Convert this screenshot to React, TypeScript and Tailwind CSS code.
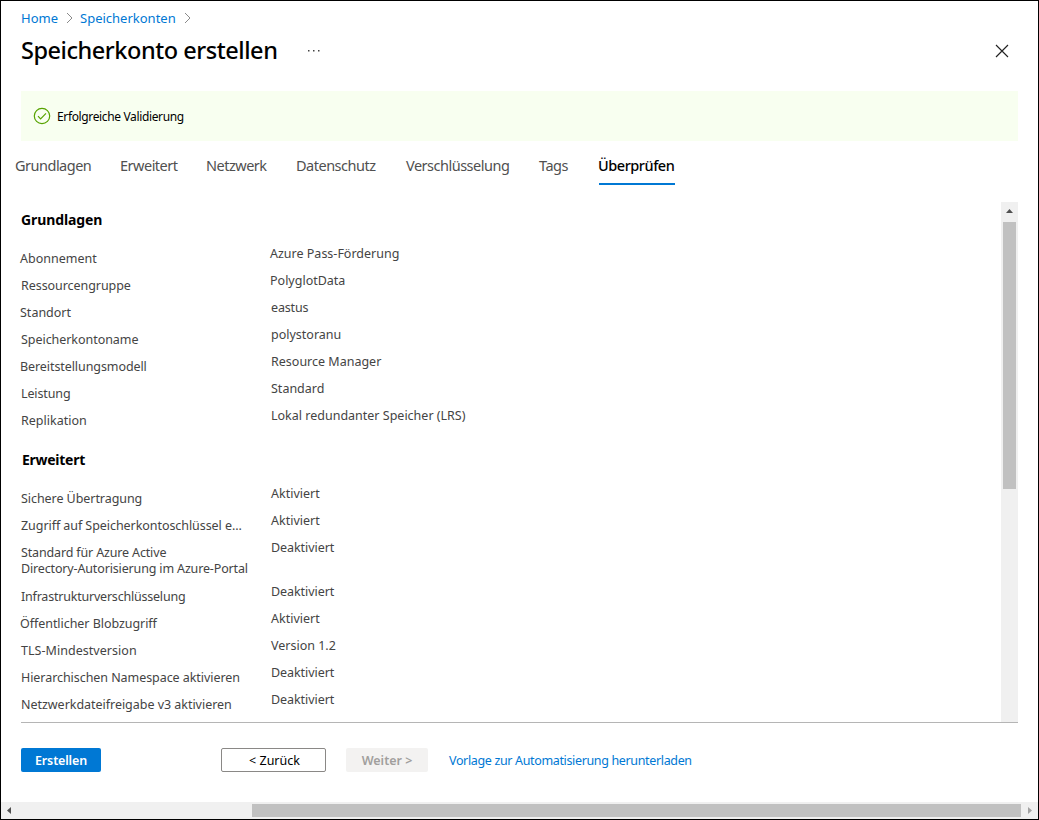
import React from "react";

type Entry = { label: string[]; value: string; labelClass?: string; valueClass?: string };

const basics: Entry[] = [
  { label: ["Abonnement"], value: "Azure Pass-Förderung", labelClass: "-ml-px", valueClass: "-ml-px" },
  { label: ["Ressourcengruppe"], value: "PolyglotData", labelClass: "tracking-[-0.06px]", valueClass: "-ml-px" },
  { label: ["Standort"], value: "eastus", labelClass: "-ml-px", valueClass: "tracking-[-0.15px]" },
  { label: ["Speicherkontoname"], value: "polystoranu", labelClass: "tracking-[-0.05px]" },
  { label: ["Bereitstellungsmodell"], value: "Resource Manager", labelClass: "-ml-px tracking-[-0.08px]" },
  { label: ["Leistung"], value: "Standard", labelClass: "tracking-[-0.12px]" },
  { label: ["Replikation"], value: "Lokal redundanter Speicher (LRS)" },
];

const advanced: Entry[] = [
  { label: ["Sichere Übertragung"], value: "Aktiviert", labelClass: "tracking-[-0.06px]" },
  { label: ["Zugriff auf Speicherkontoschlüssel e..."], value: "Aktiviert", labelClass: "tracking-[-0.06px]" },
  { label: ["Standard für Azure Active", "Directory-Autorisierung im Azure-Portal"], value: "Deaktiviert", labelClass: "tracking-[-0.15px]", valueClass: "tracking-[-0.06px]" },
  { label: ["Infrastrukturverschlüsselung"], value: "Deaktiviert", labelClass: "tracking-[-0.21px]", valueClass: "tracking-[-0.06px]" },
  { label: ["Öffentlicher Blobzugriff"], value: "Aktiviert", labelClass: "-ml-px tracking-[-0.05px]" },
  { label: ["TLS-Mindestversion"], value: "Version 1.2", labelClass: "tracking-[0.04px]" },
  { label: ["Hierarchischen Namespace aktivieren"], value: "Deaktiviert", labelClass: "tracking-[-0.06px]", valueClass: "tracking-[-0.06px]" },
  { label: ["Netzwerkdateifreigabe v3 aktivieren"], value: "Deaktiviert", labelClass: "tracking-[-0.03px]", valueClass: "tracking-[-0.06px]" },
];

const tabs = [
  { name: "Grundlagen", width: "w-[76px]" },
  { name: "Erweitert", width: "w-[57px]" },
  { name: "Netzwerk", width: "w-[61px]" },
  { name: "Datenschutz", width: "w-[81px]" },
  { name: "Verschlüsselung", width: "w-[104px]" },
  { name: "Tags", width: "w-[31px]" },
];

function Rows({ entries }: { entries: Entry[] }) {
  return (
    <dl className="text-[12.5px] leading-4 text-[#444444]">
      {entries.map((e) => (
        <div key={e.label[0]} className={`flex ${e.label.length > 1 ? "h-11" : "h-[27px]"}`}>
          <dt className="w-[250px] shrink-0 whitespace-nowrap pt-[5px]">
            {e.label.map((line) => (
              <div key={line} className={e.labelClass}>{line}</div>
            ))}
          </dt>
          <dd className="whitespace-nowrap">
            <div className={e.valueClass}>{e.value}</div>
          </dd>
        </div>
      ))}
    </dl>
  );
}

function Chevron() {
  return (
    <svg width="7" height="12" viewBox="0 0 7 12" fill="none" stroke="#8a8a8a" strokeWidth="1">
      <path d="M1 1l5 5-5 5" />
    </svg>
  );
}

export default function App() {
  return (
    <div className="flex h-[820px] w-[1039px] flex-col overflow-hidden border border-black bg-white font-['Noto_Sans',sans-serif] text-black">
      <nav className="flex h-[34px] items-center pl-5 text-[13px] text-[#0078d4]">
        <span className="w-[45px] whitespace-nowrap pt-0.5">Home</span>
        <Chevron />
        <span className="ml-[7px] w-[104px] whitespace-nowrap pt-0.5">Speicherkonten</span>
        <Chevron />
      </nav>
      <header className="flex h-8 items-center pl-5 pr-[29px]">
        <h1 className="w-[287px] whitespace-nowrap pb-0.5 text-[23.5px] font-medium leading-[30px] tracking-[-0.46px]">Speicherkonto erstellen</h1>
        <svg width="12" height="2" viewBox="0 0 12 2" fill="#444444">
          <path d="M0 0h1.5v1.5H0zM5 0h1.5v1.5H5zM10 0h1.5v1.5H10z" />
        </svg>
        <svg className="ml-auto" width="14" height="14" viewBox="0 0 14 14" stroke="#222222" strokeWidth="1.15">
          <path d="M1 1l12 12M13 1L1 13" />
        </svg>
      </header>

      <div className="ml-5 mt-6 flex h-[50px] w-[997px] shrink-0 items-center bg-[#f8fff0] pl-3">
        <svg width="18" height="18" viewBox="0 0 18 18" fill="none" stroke="#57a300" strokeWidth="1.2">
          <circle cx="9" cy="9" r="7.7" />
          <path d="M5 9.2l2.6 2.6L13 6.4" />
        </svg>
        <span className="ml-[6px] whitespace-nowrap pt-0.5 text-[12px] tracking-[-0.36px]">Erfolgreiche Validierung</span>
      </div>

      <div className="ml-[14px] flex h-[45px] shrink-0 gap-[29px] pt-3 text-[14.5px] leading-6 tracking-[-0.5px] text-[#505050]">
        {tabs.map((t) => (
          <div key={t.name} className={`${t.width} whitespace-nowrap`}>{t.name}</div>
        ))}
        <div className="h-8 w-[76px] whitespace-nowrap border-b-2 border-[#0078d4] font-medium text-black">
          <div className="-ml-px tracking-[-0.46px]">Überprüfen</div>
        </div>
      </div>

      <main className="ml-5 mt-4 flex h-[521px] w-[997px] shrink-0 border-b border-[#b5b5b5]">
        <div className="flex-1">
          <h2 className="h-11 pt-2 text-[14px] font-bold leading-5 tracking-[-0.1px]">Grundlagen</h2>
          <Rows entries={basics} />
          <h2 className="ml-px mt-[7px] h-11 pt-2 text-[14px] font-bold leading-5 tracking-[-0.27px]">Erweitert</h2>
          <Rows entries={advanced} />
        </div>
        <div className="flex w-[17px] flex-col items-center bg-[#f0f0f0]">
          <svg width="17" height="20" viewBox="0 0 17 20" fill="#505050"><path d="M5 11l3.500-4L12 11z" /></svg>
          <div className="h-[267px] w-[13px] bg-[#c1c1c1]" />
        </div>
      </main>

      <footer className="flex h-[79px] shrink-0 items-start pl-5 pt-[25px] text-[12.5px] leading-6">
        <button className="h-6 w-20 rounded-[2px] bg-[#0078d4] pt-px font-semibold tracking-[-0.15px] text-white">Erstellen</button>
        <button className="ml-[120px] flex h-6 w-[105px] items-center justify-center rounded-[2px] border border-[#8a8886] pl-0.5 pt-0.5">&lt; Zurück</button>
        <button className="ml-5 h-6 w-[82px] rounded-[2px] bg-[#f3f2f1] pt-px font-semibold text-[#a19f9d]">Weiter &gt;</button>
        <a className="ml-[21px] whitespace-nowrap pt-px tracking-[-0.35px] text-[#0078d4]">Vorlage zur Automatisierung herunterladen</a>
      </footer>

      <div className="flex h-[17px] shrink-0 items-center bg-[#f0f0f0]">
        <svg width="251" height="17" viewBox="0 0 251 17" fill="#505050"><path d="M10 5v7L6 8.500z" /></svg>
        <div className="h-[13px] w-[769px] bg-[#c1c1c1]" />
        <svg width="17" height="17" viewBox="0 0 17 17" fill="#a3a3a3"><path d="M7 5v7l4-3.500z" /></svg>
      </div>
    </div>
  );
}
